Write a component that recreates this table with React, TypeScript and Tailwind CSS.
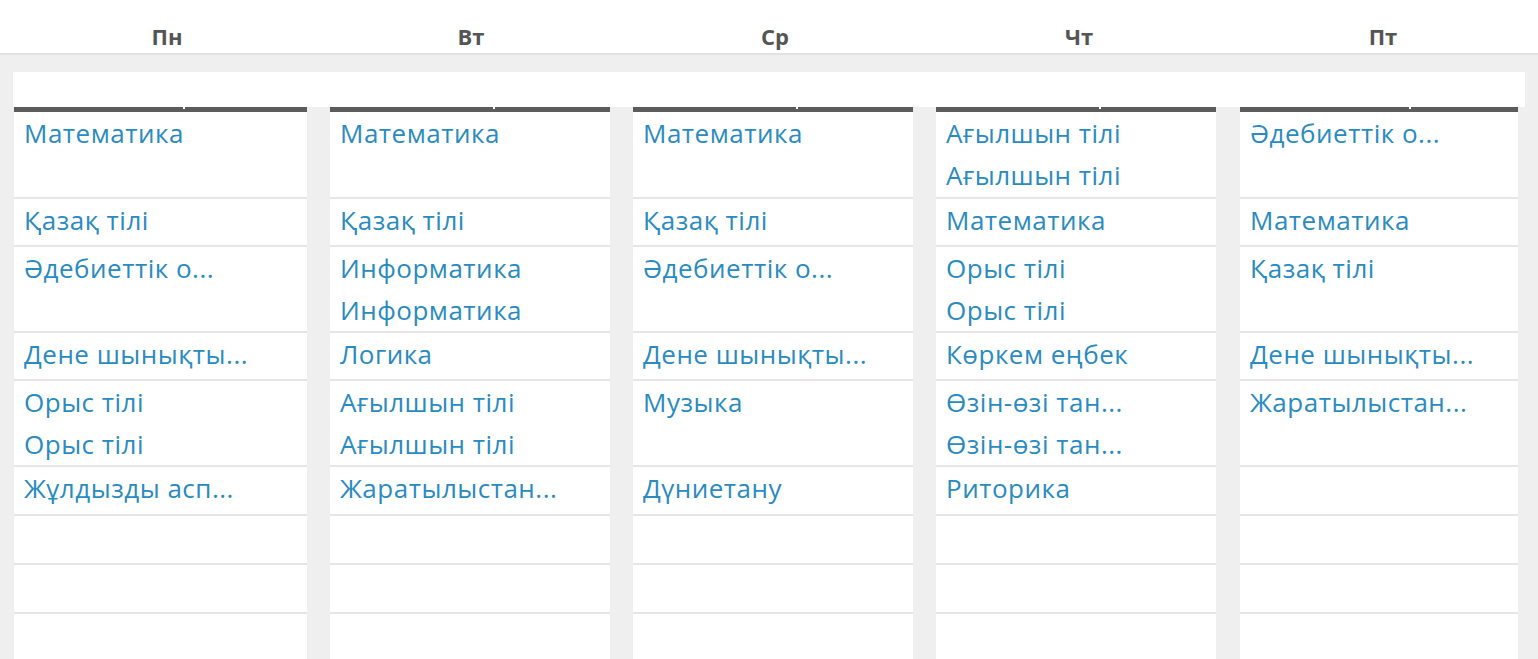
const days = ["Пн", "Вт", "Ср", "Чт", "Пт"];

// height of each row, 2px bottom border included
const rowHeights = ["h-[87px]", "h-[48px]", "h-[86px]", "h-[48px]", "h-[86px]", "h-[49px]", "h-[49px]", "h-[49px]", "h-[49px]"];

interface Icolumn {
  width: string;
  tick: string;
  lessons: string[][];
}

const columns: Icolumn[] = [
  {
    width: "w-[293px] ml-[14px]",
    tick: "left-[169px]",
    lessons: [
      ["Математика"],
      ["Қазақ тілі"],
      ["Әдебиеттік о..."],
      ["Дене шынықты..."],
      ["Орыс тілі", "Орыс тілі"],
      ["Жұлдызды асп..."],
      [],
      [],
      [],
    ],
  },
  {
    width: "w-[280px] ml-[23px]",
    tick: "left-[163px]",
    lessons: [
      ["Математика"],
      ["Қазақ тілі"],
      ["Информатика", "Информатика"],
      ["Логика"],
      ["Ағылшын тілі", "Ағылшын тілі"],
      ["Жаратылыстан..."],
      [],
      [],
      [],
    ],
  },
  {
    width: "w-[280px] ml-[23px]",
    tick: "left-[163px]",
    lessons: [
      ["Математика"],
      ["Қазақ тілі"],
      ["Әдебиеттік о..."],
      ["Дене шынықты..."],
      ["Музыка"],
      ["Дүниетану"],
      [],
      [],
      [],
    ],
  },
  {
    width: "w-[280px] ml-[23px]",
    tick: "left-[163px]",
    lessons: [
      ["Ағылшын тілі", "Ағылшын тілі"],
      ["Математика"],
      ["Орыс тілі", "Орыс тілі"],
      ["Көркем еңбек"],
      ["Өзін-өзі тан...", "Өзін-өзі тан..."],
      ["Риторика"],
      [],
      [],
      [],
    ],
  },
  {
    width: "w-[278px] ml-[24px]",
    tick: "left-[169px]",
    lessons: [
      ["Әдебиеттік о..."],
      ["Математика"],
      ["Қазақ тілі"],
      ["Дене шынықты..."],
      ["Жаратылыстан..."],
      [],
      [],
      [],
      [],
    ],
  },
];

const DayColumn = (prop: Icolumn) => (
  <div className={`flex flex-col shrink-0 ${prop.width}`}>
    <div className="relative h-[5px] bg-[#5c5c5c]">
      <div className={`absolute top-0 h-[2px] w-[2px] bg-white ${prop.tick}`}></div>
    </div>
    {prop.lessons.map((lines, i) => (
      <div
        key={i}
        className={`bg-white border-b-2 border-[#e6e6e6] pl-[10px] flex flex-col ${rowHeights[i]}`}
      >
        {lines.map((l, j) => (
          <a key={j} className="text-[26px] leading-[42px] tracking-[0.5px] text-[#2a8bc2] whitespace-nowrap cursor-pointer">
            {l}
          </a>
        ))}
      </div>
    ))}
  </div>
);

const App = () => {
  return (
    <div className="w-[1538px] h-[659px] overflow-hidden bg-white font-['Open_Sans',Arial,sans-serif]">
      <div className="flex h-[55px] pl-[15px] border-b-2 border-[#e2e2e2]">
        {days.map((d) => (
          <div key={d} className="w-[304px] pt-[20px] text-center text-[22px] leading-[32px] font-bold text-[#555555]">
            {d}
          </div>
        ))}
      </div>
      <div className="bg-[#efefef] pt-[17px] h-[604px]">
        <div className="ml-[13px] w-[1512px] h-[35px] bg-white"></div>
        <div className="flex">
          {columns.map((c, i) => (
            <DayColumn key={i} {...c} />
          ))}
        </div>
      </div>
    </div>
  );
};

export default App;
